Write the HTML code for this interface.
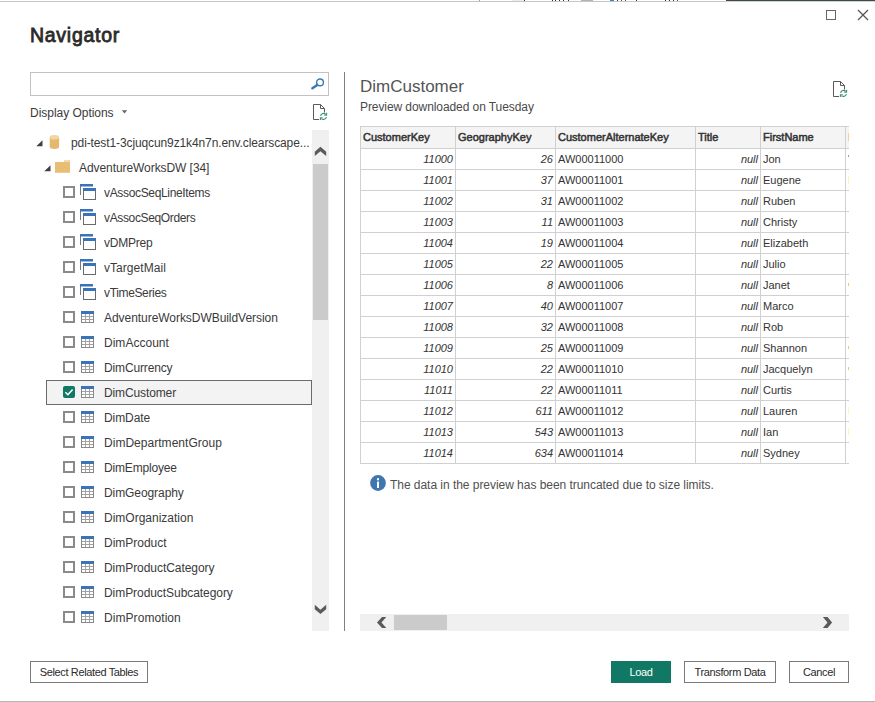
<!DOCTYPE html>
<html lang="en"><head><meta charset="utf-8"><title>Navigator</title>
<style>
*{box-sizing:border-box;margin:0;padding:0}
html,body{width:875px;height:702px;overflow:hidden;background:#fff}
body{font-family:"Liberation Sans",sans-serif;font-size:12px;color:#3a3a3a}
#win{position:absolute;left:0;top:0;width:875px;height:702px;background:#fff;overflow:hidden}
.abs{position:absolute}
#topline{position:absolute;left:0;top:1px;width:875px;height:1px;background:#c6c6c6}
#botline{position:absolute;left:0;top:701px;width:875px;height:1px;background:#b4b4b4}
h1{position:absolute;left:30px;top:22px;font-size:19.5px;font-weight:normal;color:#2b2a29;-webkit-text-stroke:0.8px #2b2a29;line-height:26px;white-space:nowrap;letter-spacing:0.72px}
#search{position:absolute;left:30px;top:72px;width:299px;height:24px;border:1px solid #c2c2c2;background:#fff}
#dopt{position:absolute;left:30px;top:105px;line-height:16px;white-space:nowrap;color:#3a3a3a;letter-spacing:-0.03px}
#tree{position:absolute;left:0;top:0;width:312px;height:632px;overflow:hidden}
.tr{position:absolute;left:0;width:312px;height:25px;line-height:25px;white-space:nowrap}
.tri{position:absolute;top:9px}
.ic{position:absolute}
.lbl{position:absolute;top:1px;color:#3a3a3a}
.cb{position:absolute;left:63px;top:6px;width:12px;height:12px;border:2px solid #8a8a8a;background:#fff}
.cb.on{border:0;background:#117865;border-radius:2px}
.cb.on svg{position:absolute;left:0;top:0}
.selbox{position:absolute;left:46px;width:266px;height:25px;border:1px solid #6b6b6b;background:#f3f3f3}
#vsb{position:absolute;left:312px;top:130px;width:17px;height:501px;background:#f0f0f0}
#vthumb{position:absolute;left:313px;top:164px;width:15px;height:156px;background:#cbcbcb}
#vdiv{position:absolute;left:344px;top:72px;width:1px;height:559px;background:#808080}
#ptitle{position:absolute;left:360px;top:74px;font-size:17px;line-height:26px;color:#555;white-space:nowrap}
#psub{position:absolute;left:360px;top:99px;line-height:16px;color:#4a4a4a;white-space:nowrap;letter-spacing:-0.08px}
#grid{position:absolute;left:360px;top:126px;width:489px;height:338px;overflow:hidden;font-size:11px}
.hr{position:absolute;left:0;top:0;width:489px;height:23px}
.hc{position:absolute;top:0;height:23px;line-height:21px;border:1px solid #d0d0d0;border-right:0;background:#f4f4f4;color:#333;-webkit-text-stroke:0.5px #333;padding-left:2px;white-space:nowrap;overflow:hidden}
.dr{position:absolute;left:0;width:489px;height:22px}
.dc{position:absolute;top:0;height:22px;line-height:20px;border:1px solid #d0d0d0;border-right:0;background:#fff;color:#333;padding:0 2px;white-space:nowrap;overflow:hidden}
.dc.n{text-align:right;font-style:italic}
#info{position:absolute;left:390px;top:477px;line-height:16px;color:#505050;white-space:nowrap;letter-spacing:-0.04px}
#hsb{position:absolute;left:360px;top:614px;width:489px;height:17px;background:#f0f0f0}
#hthumb{position:absolute;left:394px;top:615px;width:53px;height:15px;background:#cbcbcb}
.btn{position:absolute;top:661px;height:22px;line-height:20px;border:1px solid #7a7a7a;background:#fff;color:#2a2a2a;text-align:center;white-space:nowrap;font-size:11px;letter-spacing:-0.37px}
.btn.pri{background:#117865;border-color:#117865;color:#fff}

</style></head><body>
<div id="win">
<div id="topline"></div>
<svg class="abs" style="left:0;top:0" width="875" height="1" viewBox="0 0 875 1"><rect x="512" y="0" width="12" height="1" fill="#ececec"/><rect x="581" y="0" width="12" height="1" fill="#b4b4b4"/><rect x="610" y="0" width="4" height="1" fill="#3f7fd0"/><rect x="479" y="0" width="1" height="1" fill="#9a9a9a"/><rect x="524" y="0" width="1" height="1" fill="#333"/><rect x="552" y="0" width="1" height="1" fill="#333"/><rect x="555" y="0" width="1" height="1" fill="#333"/><rect x="559" y="0" width="1" height="1" fill="#333"/><rect x="563" y="0" width="1" height="1" fill="#333"/><rect x="568" y="0" width="1" height="1" fill="#333"/><rect x="617" y="0" width="1" height="1" fill="#333"/><rect x="621" y="0" width="1" height="1" fill="#555"/><rect x="625" y="0" width="1" height="1" fill="#555"/><rect x="636" y="0" width="1" height="1" fill="#333"/><rect x="665" y="0" width="1" height="1" fill="#333"/><rect x="669" y="0" width="1" height="1" fill="#333"/><rect x="673" y="0" width="1" height="1" fill="#333"/><rect x="677" y="0" width="1" height="1" fill="#555"/></svg>
<div class="abs" style="left:726px;top:0;width:149px;height:1px;background:#3f4c45"></div>
<div class="abs" style="left:726px;top:1px;width:149px;height:1px;background:#cfd2d0"></div>
<svg class="abs" style="left:824px;top:8px" width="14" height="14" viewBox="0 0 14 14"><rect x="2.5" y="2.5" width="9" height="9" fill="none" stroke="#666" stroke-width="1"/></svg>
<svg class="abs" style="left:856px;top:8px" width="14" height="14" viewBox="0 0 14 14"><path d="M2 2l10 10M12 2L2 12" stroke="#555" stroke-width="1.25" fill="none"/></svg>
<h1>Navigator</h1>
<div id="search"></div>
<svg class="abs" style="left:310px;top:76px" width="16" height="16" viewBox="0 0 16 16"><circle cx="10" cy="6.4" r="3.4" fill="none" stroke="#3b78b8" stroke-width="1.4"/><path d="M7.2 8.9L2.4 12.3" stroke="#3b78b8" stroke-width="2.5" stroke-linecap="round"/></svg>
<div id="dopt">Display Options</div>
<svg class="abs" style="left:121px;top:110px" width="7" height="4" viewBox="0 0 7 4"><path d="M0.8 0.3h5.4L3.5 3.4Z" fill="#666"/></svg>
<svg class="abs" style="left:312px;top:103px" width="17" height="19" viewBox="0 0 17 19"><path d="M7 16.5H1.5v-15h7l4 4v4" fill="none" stroke="#5a5a5a" stroke-width="1"/><path d="M8.5 1.5v4h4" fill="none" stroke="#5a5a5a" stroke-width="1"/><path d="M8.6 12.8a3 3 0 0 1 5-1.6M14.4 14a3 3 0 0 1-5 1.6" fill="none" stroke="#3a9474" stroke-width="1.2"/><path d="M14.6 9.8v2.3h-2.3M8.4 17v-2.3h2.3" fill="none" stroke="#3a9474" stroke-width="1.1"/></svg>
<div id="vsb"></div><div id="vthumb"></div>
<svg class="abs" style="left:312px;top:140px" width="17" height="20" viewBox="0 0 17 20"><path d="M8.4 6.7l5.8 5v4.4l-5.8-4.9-5.6 4.9v-4.4Z" fill="#5a5a5a"/></svg>
<svg class="abs" style="left:312px;top:600px" width="17" height="20" viewBox="0 0 17 20"><path d="M2.8 4.8l5.6 4.9 5.8-4.9v4.4l-5.8 4.7-5.6-4.7Z" fill="#5a5a5a"/></svg>
<div id="vdiv"></div>
<div id="tree">
<div class="tr" style="top:130px"><svg class="tri" style="left:36px;top:10px" width="7" height="7" viewBox="0 0 7 7"><path d="M6.5 0.3V6.2H0.3Z" fill="#404040"/></svg><svg class="ic" style="left:49px;top:4px" width="11" height="16" viewBox="0 0 11 16"><path d="M0.7 3.2v9.6c0 1.3 2 2.3 4.7 2.3s4.7-1 4.7-2.3V3.2Z" fill="#e5b96d"/><ellipse cx="5.4" cy="3.2" rx="4.7" ry="2.3" fill="#f2d6a2"/></svg><span class="lbl" style="left:71px;letter-spacing:-0.11px">pdi-test1-3cjuqcun9z1k4n7n.env.clearscape...</span></div>
<div class="tr" style="top:155px"><svg class="tri" style="left:44px;top:10px" width="7" height="7" viewBox="0 0 7 7"><path d="M6.5 0.3V6.2H0.3Z" fill="#404040"/></svg><svg class="ic" style="left:55px;top:5px" width="16" height="14" viewBox="0 0 16 14"><path d="M0 2h8.6l1-1.8H15v12.6H0Z" fill="#e8bd74"/><path d="M9.2 1.7l0.8-1.2h4.6v1.2Z" fill="#f8e6c4"/></svg><span class="lbl" style="left:79px;letter-spacing:-0.07px">AdventureWorksDW [34]</span></div>
<div class="tr" style="top:180px"><i class="cb"></i><svg class="ic" style="left:80px;top:4px" width="17" height="17" viewBox="0 0 17 17"><path d="M0.5 11V0.5h12" fill="none" stroke="#7a7a7a"/><rect x="0" y="0" width="13" height="2.5" fill="#3b73b9"/><rect x="3.5" y="4.5" width="12" height="11" fill="#fff" stroke="#6a6a6a"/><rect x="3" y="4" width="13" height="3" fill="#3b73b9"/></svg><span class="lbl" style="left:104px;letter-spacing:-0.34px">vAssocSeqLineItems</span></div>
<div class="tr" style="top:205px"><i class="cb"></i><svg class="ic" style="left:80px;top:4px" width="17" height="17" viewBox="0 0 17 17"><path d="M0.5 11V0.5h12" fill="none" stroke="#7a7a7a"/><rect x="0" y="0" width="13" height="2.5" fill="#3b73b9"/><rect x="3.5" y="4.5" width="12" height="11" fill="#fff" stroke="#6a6a6a"/><rect x="3" y="4" width="13" height="3" fill="#3b73b9"/></svg><span class="lbl" style="left:104px;letter-spacing:-0.36px">vAssocSeqOrders</span></div>
<div class="tr" style="top:230px"><i class="cb"></i><svg class="ic" style="left:80px;top:4px" width="17" height="17" viewBox="0 0 17 17"><path d="M0.5 11V0.5h12" fill="none" stroke="#7a7a7a"/><rect x="0" y="0" width="13" height="2.5" fill="#3b73b9"/><rect x="3.5" y="4.5" width="12" height="11" fill="#fff" stroke="#6a6a6a"/><rect x="3" y="4" width="13" height="3" fill="#3b73b9"/></svg><span class="lbl" style="left:104px;letter-spacing:-0.22px">vDMPrep</span></div>
<div class="tr" style="top:255px"><i class="cb"></i><svg class="ic" style="left:80px;top:4px" width="17" height="17" viewBox="0 0 17 17"><path d="M0.5 11V0.5h12" fill="none" stroke="#7a7a7a"/><rect x="0" y="0" width="13" height="2.5" fill="#3b73b9"/><rect x="3.5" y="4.5" width="12" height="11" fill="#fff" stroke="#6a6a6a"/><rect x="3" y="4" width="13" height="3" fill="#3b73b9"/></svg><span class="lbl" style="left:104px;letter-spacing:0.05px">vTargetMail</span></div>
<div class="tr" style="top:280px"><i class="cb"></i><svg class="ic" style="left:80px;top:4px" width="17" height="17" viewBox="0 0 17 17"><path d="M0.5 11V0.5h12" fill="none" stroke="#7a7a7a"/><rect x="0" y="0" width="13" height="2.5" fill="#3b73b9"/><rect x="3.5" y="4.5" width="12" height="11" fill="#fff" stroke="#6a6a6a"/><rect x="3" y="4" width="13" height="3" fill="#3b73b9"/></svg><span class="lbl" style="left:104px;letter-spacing:-0.35px">vTimeSeries</span></div>
<div class="tr" style="top:305px"><i class="cb"></i><svg class="ic" style="left:81px;top:6px" width="13" height="12" viewBox="0 0 13 12"><rect x="0.5" y="0.5" width="12" height="11" fill="#fff" stroke="#888"/><path d="M1 5.5h11M1 8.5h11M4.5 3v8M8.5 3v8" stroke="#a2a2a2" fill="none"/><rect x="0" y="0" width="13" height="3" fill="#3b73b9"/></svg><span class="lbl" style="left:104px;letter-spacing:-0.05px">AdventureWorksDWBuildVersion</span></div>
<div class="tr" style="top:330px"><i class="cb"></i><svg class="ic" style="left:81px;top:6px" width="13" height="12" viewBox="0 0 13 12"><rect x="0.5" y="0.5" width="12" height="11" fill="#fff" stroke="#888"/><path d="M1 5.5h11M1 8.5h11M4.5 3v8M8.5 3v8" stroke="#a2a2a2" fill="none"/><rect x="0" y="0" width="13" height="3" fill="#3b73b9"/></svg><span class="lbl" style="left:104px;letter-spacing:0.02px">DimAccount</span></div>
<div class="tr" style="top:355px"><i class="cb"></i><svg class="ic" style="left:81px;top:6px" width="13" height="12" viewBox="0 0 13 12"><rect x="0.5" y="0.5" width="12" height="11" fill="#fff" stroke="#888"/><path d="M1 5.5h11M1 8.5h11M4.5 3v8M8.5 3v8" stroke="#a2a2a2" fill="none"/><rect x="0" y="0" width="13" height="3" fill="#3b73b9"/></svg><span class="lbl" style="left:104px;letter-spacing:-0.14px">DimCurrency</span></div>
<div class="selbox" style="top:380px"></div><div class="tr" style="top:380px"><i class="cb on"><svg width="12" height="12" viewBox="0 0 12 12"><path d="M2.4 6.2l2.5 2.5 4.7-5.2" fill="none" stroke="#fff" stroke-width="1.6"/></svg></i><svg class="ic" style="left:81px;top:6px" width="13" height="12" viewBox="0 0 13 12"><rect x="0.5" y="0.5" width="12" height="11" fill="#fff" stroke="#888"/><path d="M1 5.5h11M1 8.5h11M4.5 3v8M8.5 3v8" stroke="#a2a2a2" fill="none"/><rect x="0" y="0" width="13" height="3" fill="#3b73b9"/></svg><span class="lbl" style="left:104px;letter-spacing:-0.12px">DimCustomer</span></div>
<div class="tr" style="top:405px"><i class="cb"></i><svg class="ic" style="left:81px;top:6px" width="13" height="12" viewBox="0 0 13 12"><rect x="0.5" y="0.5" width="12" height="11" fill="#fff" stroke="#888"/><path d="M1 5.5h11M1 8.5h11M4.5 3v8M8.5 3v8" stroke="#a2a2a2" fill="none"/><rect x="0" y="0" width="13" height="3" fill="#3b73b9"/></svg><span class="lbl" style="left:104px;letter-spacing:-0.08px">DimDate</span></div>
<div class="tr" style="top:430px"><i class="cb"></i><svg class="ic" style="left:81px;top:6px" width="13" height="12" viewBox="0 0 13 12"><rect x="0.5" y="0.5" width="12" height="11" fill="#fff" stroke="#888"/><path d="M1 5.5h11M1 8.5h11M4.5 3v8M8.5 3v8" stroke="#a2a2a2" fill="none"/><rect x="0" y="0" width="13" height="3" fill="#3b73b9"/></svg><span class="lbl" style="left:104px;letter-spacing:0.03px">DimDepartmentGroup</span></div>
<div class="tr" style="top:455px"><i class="cb"></i><svg class="ic" style="left:81px;top:6px" width="13" height="12" viewBox="0 0 13 12"><rect x="0.5" y="0.5" width="12" height="11" fill="#fff" stroke="#888"/><path d="M1 5.5h11M1 8.5h11M4.5 3v8M8.5 3v8" stroke="#a2a2a2" fill="none"/><rect x="0" y="0" width="13" height="3" fill="#3b73b9"/></svg><span class="lbl" style="left:104px;letter-spacing:-0.17px">DimEmployee</span></div>
<div class="tr" style="top:480px"><i class="cb"></i><svg class="ic" style="left:81px;top:6px" width="13" height="12" viewBox="0 0 13 12"><rect x="0.5" y="0.5" width="12" height="11" fill="#fff" stroke="#888"/><path d="M1 5.5h11M1 8.5h11M4.5 3v8M8.5 3v8" stroke="#a2a2a2" fill="none"/><rect x="0" y="0" width="13" height="3" fill="#3b73b9"/></svg><span class="lbl" style="left:104px;letter-spacing:-0.08px">DimGeography</span></div>
<div class="tr" style="top:505px"><i class="cb"></i><svg class="ic" style="left:81px;top:6px" width="13" height="12" viewBox="0 0 13 12"><rect x="0.5" y="0.5" width="12" height="11" fill="#fff" stroke="#888"/><path d="M1 5.5h11M1 8.5h11M4.5 3v8M8.5 3v8" stroke="#a2a2a2" fill="none"/><rect x="0" y="0" width="13" height="3" fill="#3b73b9"/></svg><span class="lbl" style="left:104px">DimOrganization</span></div>
<div class="tr" style="top:530px"><i class="cb"></i><svg class="ic" style="left:81px;top:6px" width="13" height="12" viewBox="0 0 13 12"><rect x="0.5" y="0.5" width="12" height="11" fill="#fff" stroke="#888"/><path d="M1 5.5h11M1 8.5h11M4.5 3v8M8.5 3v8" stroke="#a2a2a2" fill="none"/><rect x="0" y="0" width="13" height="3" fill="#3b73b9"/></svg><span class="lbl" style="left:104px;letter-spacing:-0.02px">DimProduct</span></div>
<div class="tr" style="top:555px"><i class="cb"></i><svg class="ic" style="left:81px;top:6px" width="13" height="12" viewBox="0 0 13 12"><rect x="0.5" y="0.5" width="12" height="11" fill="#fff" stroke="#888"/><path d="M1 5.5h11M1 8.5h11M4.5 3v8M8.5 3v8" stroke="#a2a2a2" fill="none"/><rect x="0" y="0" width="13" height="3" fill="#3b73b9"/></svg><span class="lbl" style="left:104px;letter-spacing:-0.05px">DimProductCategory</span></div>
<div class="tr" style="top:580px"><i class="cb"></i><svg class="ic" style="left:81px;top:6px" width="13" height="12" viewBox="0 0 13 12"><rect x="0.5" y="0.5" width="12" height="11" fill="#fff" stroke="#888"/><path d="M1 5.5h11M1 8.5h11M4.5 3v8M8.5 3v8" stroke="#a2a2a2" fill="none"/><rect x="0" y="0" width="13" height="3" fill="#3b73b9"/></svg><span class="lbl" style="left:104px;letter-spacing:-0.06px">DimProductSubcategory</span></div>
<div class="tr" style="top:605px"><i class="cb"></i><svg class="ic" style="left:81px;top:6px" width="13" height="12" viewBox="0 0 13 12"><rect x="0.5" y="0.5" width="12" height="11" fill="#fff" stroke="#888"/><path d="M1 5.5h11M1 8.5h11M4.5 3v8M8.5 3v8" stroke="#a2a2a2" fill="none"/><rect x="0" y="0" width="13" height="3" fill="#3b73b9"/></svg><span class="lbl" style="left:104px;letter-spacing:0.07px">DimPromotion</span></div>
</div>
<div id="ptitle">DimCustomer</div>
<div id="psub">Preview downloaded on Tuesday</div>
<svg class="abs" style="left:832px;top:80px" width="17" height="19" viewBox="0 0 17 19"><path d="M7 16.5H1.5v-15h7l4 4v4" fill="none" stroke="#5a5a5a" stroke-width="1"/><path d="M8.5 1.5v4h4" fill="none" stroke="#5a5a5a" stroke-width="1"/><path d="M8.6 12.8a3 3 0 0 1 5-1.6M14.4 14a3 3 0 0 1-5 1.6" fill="none" stroke="#3a9474" stroke-width="1.2"/><path d="M14.6 9.8v2.3h-2.3M8.4 17v-2.3h2.3" fill="none" stroke="#3a9474" stroke-width="1.1"/></svg>
<div id="grid">
<div class="hr"><span class="hc" style="left:0px;width:95px">CustomerKey</span><span class="hc" style="left:95px;width:100px">GeographyKey</span><span class="hc" style="left:195px;width:140px">CustomerAlternateKey</span><span class="hc" style="left:335px;width:65px">Title</span><span class="hc" style="left:400px;width:85px">FirstName</span><span class="hc" style="left:485px;width:4px"></span></div>
<div class="dr" style="top:22px"><span class="dc n" style="left:0px;width:95px">11000</span><span class="dc n" style="left:95px;width:100px">26</span><span class="dc t" style="left:195px;width:140px">AW00011000</span><span class="dc n" style="left:335px;width:65px">null</span><span class="dc t" style="left:400px;width:85px">Jon</span><span class="dc" style="left:485px;width:4px"></span></div>
<div class="dr" style="top:43px"><span class="dc n" style="left:0px;width:95px">11001</span><span class="dc n" style="left:95px;width:100px">37</span><span class="dc t" style="left:195px;width:140px">AW00011001</span><span class="dc n" style="left:335px;width:65px">null</span><span class="dc t" style="left:400px;width:85px">Eugene</span><span class="dc" style="left:485px;width:4px"></span></div>
<div class="dr" style="top:64px"><span class="dc n" style="left:0px;width:95px">11002</span><span class="dc n" style="left:95px;width:100px">31</span><span class="dc t" style="left:195px;width:140px">AW00011002</span><span class="dc n" style="left:335px;width:65px">null</span><span class="dc t" style="left:400px;width:85px">Ruben</span><span class="dc" style="left:485px;width:4px"></span></div>
<div class="dr" style="top:85px"><span class="dc n" style="left:0px;width:95px">11003</span><span class="dc n" style="left:95px;width:100px">11</span><span class="dc t" style="left:195px;width:140px">AW00011003</span><span class="dc n" style="left:335px;width:65px">null</span><span class="dc t" style="left:400px;width:85px">Christy</span><span class="dc" style="left:485px;width:4px"></span></div>
<div class="dr" style="top:106px"><span class="dc n" style="left:0px;width:95px">11004</span><span class="dc n" style="left:95px;width:100px">19</span><span class="dc t" style="left:195px;width:140px">AW00011004</span><span class="dc n" style="left:335px;width:65px">null</span><span class="dc t" style="left:400px;width:85px">Elizabeth</span><span class="dc" style="left:485px;width:4px"></span></div>
<div class="dr" style="top:127px"><span class="dc n" style="left:0px;width:95px">11005</span><span class="dc n" style="left:95px;width:100px">22</span><span class="dc t" style="left:195px;width:140px">AW00011005</span><span class="dc n" style="left:335px;width:65px">null</span><span class="dc t" style="left:400px;width:85px">Julio</span><span class="dc" style="left:485px;width:4px"></span></div>
<div class="dr" style="top:148px"><span class="dc n" style="left:0px;width:95px">11006</span><span class="dc n" style="left:95px;width:100px">8</span><span class="dc t" style="left:195px;width:140px">AW00011006</span><span class="dc n" style="left:335px;width:65px">null</span><span class="dc t" style="left:400px;width:85px">Janet</span><span class="dc" style="left:485px;width:4px"></span></div>
<div class="dr" style="top:169px"><span class="dc n" style="left:0px;width:95px">11007</span><span class="dc n" style="left:95px;width:100px">40</span><span class="dc t" style="left:195px;width:140px">AW00011007</span><span class="dc n" style="left:335px;width:65px">null</span><span class="dc t" style="left:400px;width:85px">Marco</span><span class="dc" style="left:485px;width:4px"></span></div>
<div class="dr" style="top:190px"><span class="dc n" style="left:0px;width:95px">11008</span><span class="dc n" style="left:95px;width:100px">32</span><span class="dc t" style="left:195px;width:140px">AW00011008</span><span class="dc n" style="left:335px;width:65px">null</span><span class="dc t" style="left:400px;width:85px">Rob</span><span class="dc" style="left:485px;width:4px"></span></div>
<div class="dr" style="top:211px"><span class="dc n" style="left:0px;width:95px">11009</span><span class="dc n" style="left:95px;width:100px">25</span><span class="dc t" style="left:195px;width:140px">AW00011009</span><span class="dc n" style="left:335px;width:65px">null</span><span class="dc t" style="left:400px;width:85px">Shannon</span><span class="dc" style="left:485px;width:4px"></span></div>
<div class="dr" style="top:232px"><span class="dc n" style="left:0px;width:95px">11010</span><span class="dc n" style="left:95px;width:100px">22</span><span class="dc t" style="left:195px;width:140px">AW00011010</span><span class="dc n" style="left:335px;width:65px">null</span><span class="dc t" style="left:400px;width:85px">Jacquelyn</span><span class="dc" style="left:485px;width:4px"></span></div>
<div class="dr" style="top:253px"><span class="dc n" style="left:0px;width:95px">11011</span><span class="dc n" style="left:95px;width:100px">22</span><span class="dc t" style="left:195px;width:140px">AW00011011</span><span class="dc n" style="left:335px;width:65px">null</span><span class="dc t" style="left:400px;width:85px">Curtis</span><span class="dc" style="left:485px;width:4px"></span></div>
<div class="dr" style="top:274px"><span class="dc n" style="left:0px;width:95px">11012</span><span class="dc n" style="left:95px;width:100px">611</span><span class="dc t" style="left:195px;width:140px">AW00011012</span><span class="dc n" style="left:335px;width:65px">null</span><span class="dc t" style="left:400px;width:85px">Lauren</span><span class="dc" style="left:485px;width:4px"></span></div>
<div class="dr" style="top:295px"><span class="dc n" style="left:0px;width:95px">11013</span><span class="dc n" style="left:95px;width:100px">543</span><span class="dc t" style="left:195px;width:140px">AW00011013</span><span class="dc n" style="left:335px;width:65px">null</span><span class="dc t" style="left:400px;width:85px">Ian</span><span class="dc" style="left:485px;width:4px"></span></div>
<div class="dr" style="top:316px"><span class="dc n" style="left:0px;width:95px">11014</span><span class="dc n" style="left:95px;width:100px">634</span><span class="dc t" style="left:195px;width:140px">AW00011014</span><span class="dc n" style="left:335px;width:65px">null</span><span class="dc t" style="left:400px;width:85px">Sydney</span><span class="dc" style="left:485px;width:4px"></span></div>
</div>
<div class="abs" style="left:848px;top:133px;width:1px;height:8px;background:#f6cf9c"></div><div class="abs" style="left:848px;top:155px;width:1px;height:2px;background:#cf9455"></div><div class="abs" style="left:848px;top:176px;width:1px;height:8px;background:#fff6b5"></div><div class="abs" style="left:848px;top:283px;width:1px;height:3px;background:#f3c27c"></div><div class="abs" style="left:848px;top:346px;width:1px;height:3px;background:#f3c27c"></div><div class="abs" style="left:848px;top:367px;width:1px;height:3px;background:#f3c27c"></div><div class="abs" style="left:848px;top:407px;width:1px;height:7px;background:#fff6b5"></div><div class="abs" style="left:848px;top:428px;width:1px;height:7px;background:#fff6b5"></div>
<svg class="abs" style="left:370px;top:475px" width="16" height="16" viewBox="0 0 16 16"><circle cx="8" cy="8" r="7.9" fill="#3f76b0"/><rect x="7" y="6.6" width="2" height="6.4" fill="#fff"/><rect x="7" y="3.2" width="2" height="2.1" fill="#fff"/></svg>
<div id="info">The data in the preview has been truncated due to size limits.</div>
<div id="hsb"></div><div id="hthumb"></div>
<svg class="abs" style="left:370px;top:614px" width="20" height="17" viewBox="0 0 20 17"><path d="M7 8.6l5-5.5h4.3l-4.8 5.5 4.8 5.5H12Z" fill="#5a5a5a"/></svg>
<svg class="abs" style="left:816px;top:614px" width="20" height="17" viewBox="0 0 20 17"><path d="M6.9 3h4.6l4.6 5.5-4.6 5.5H6.9l4.6-5.5Z" fill="#5a5a5a"/></svg>
<div class="btn" style="left:30px;width:118px">Select Related Tables</div>
<div class="btn pri" style="left:611px;width:60px">Load</div>
<div class="btn" style="left:684px;width:92px">Transform Data</div>
<div class="btn" style="left:789px;width:60px">Cancel</div>
<div id="botline"></div>
</div>
</body></html>
